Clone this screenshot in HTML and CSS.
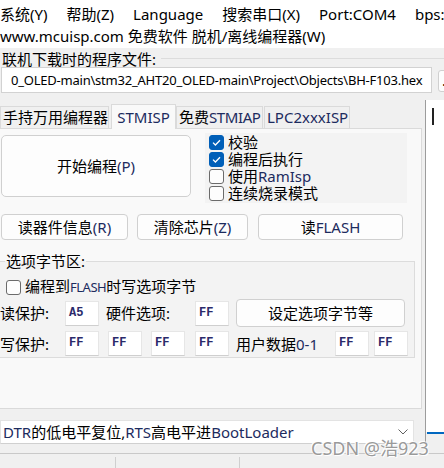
FILE: index.html
```html
<!DOCTYPE html>
<html>
<head>
<meta charset="utf-8">
<title>mcuisp</title>
<link rel="stylesheet" href="styles.css">
</head>
<body>
<div class="app">
  <div class="menubar">
    <span>系统(Y)</span><span>帮助(Z)</span><span>Language</span><span>搜索串口(X)</span><span>Port:COM4</span><span>bps:115200</span>
  </div>
  <div class="siteline">www.mcuisp.com 免费软件 脱机/离线编程器(W)</div>
  <div class="filegroup">
    <div class="fg-head"><span class="fg-label">联机下载时的程序文件:</span><span class="fg-line"></span></div>
    <div class="fg-row">
      <div class="path">0_OLED-main\stm32_AHT20_OLED-main\Project\Objects\BH-F103.hex</div>
      <div class="browse">...</div>
    </div>
  </div>
  <div class="workarea">
    <div class="leftcol">
      <div class="tabs">
        <div class="tab t1">手持万用编程器</div>
        <div class="tab t2 active"><span class="en">STMISP</span></div>
        <div class="tab t3">免费<span class="en">STMIAP</span></div>
        <div class="tab t4"><span class="en">LPC2xxxISP</span></div>
      </div>
      <div class="panel">
        <div class="toprow">
          <div class="btn bigbtn">开始编程<span class="en">(P)</span></div>
          <div class="checks">
            <div class="check"><span class="box on"><svg viewBox="0 0 15 15" width="15" height="15"><path d="M4 7.6l2.4 2.4 4.6-4.8" stroke="#fff" stroke-width="1.3" fill="none"/></svg></span><span class="clabel">校验</span></div>
            <div class="check"><span class="box on"><svg viewBox="0 0 15 15" width="15" height="15"><path d="M4 7.6l2.4 2.4 4.6-4.8" stroke="#fff" stroke-width="1.3" fill="none"/></svg></span><span class="clabel">编程后执行</span></div>
            <div class="check"><span class="box"></span><span class="clabel">使用<span class="en">RamIsp</span></span></div>
            <div class="check"><span class="box"></span><span class="clabel">连续烧录模式</span></div>
          </div>
        </div>
        <div class="btnrow">
          <div class="btn b1">读器件信息<span class="en">(R)</span></div>
          <div class="btn b2">清除芯片<span class="en">(Z)</span></div>
          <div class="btn b3">读<span class="en">FLASH</span></div>
        </div>
        <fieldset class="optgroup">
          <legend>选项字节区:</legend>
          <div class="og-check"><span class="box"></span><span class="clabel">编程到<span class="en narrow">FLASH</span>时写选项字节</span></div>
          <div class="og-row r1">
            <span class="olabel">读保护:</span>
            <span class="hex">A5</span>
            <span class="olabel hw">硬件选项:</span>
            <span class="hex">FF</span>
            <div class="btn setbtn">设定选项字节等</div>
          </div>
          <div class="og-row r2">
            <span class="olabel">写保护:</span>
            <span class="hex">FF</span>
            <span class="hex h2">FF</span>
            <span class="hex h3">FF</span>
            <span class="hex h4">FF</span>
            <span class="olabel ud">用户数据<span class="en">0-1</span></span>
            <span class="hex">FF</span>
            <span class="hex h6">FF</span>
          </div>
        </fieldset>
      </div>
      <div class="combo">
        <span class="combo-text"><span class="en">DTR</span>的低电平复位,<span class="en">RTS</span>高电平进<span class="en">BootLoader</span></span>
        <svg class="chev" viewBox="0 0 10 6" width="10" height="6"><path d="M0.5 0.5l4.5 4.5 4.5-4.5" stroke="#606060" stroke-width="1" fill="none"/></svg>
      </div>
    </div>
    <div class="sidecol">
      <div class="log"><span class="caret"></span></div>
      <div class="progress"></div>
    </div>
  </div>
  <div class="statusbar"><span class="sb sb1"></span><span class="sb sb2"></span><span class="sb sb3"></span></div>
  <div class="watermark">CSDN @浩923</div>
</div>
</body>
</html>
```
FILE: styles.css
```css
html, body {
  margin: 0;
  padding: 0;
}
body {
  background: #f0f0f0;
  font-family: "Noto Sans", "Noto Sans CJK SC", sans-serif;
  font-size: 15px;
  color: #000;
}
.app {
  width: 444px;
  height: 468px;
  position: relative;
  overflow: hidden;
}
.menubar {
  height: 28px;
  background: #fff;
  display: flex;
  align-items: center;
  gap: 19px;
  white-space: nowrap;
  line-height: 16px;
}
.siteline {
  height: 20px;
  background: #fff;
  line-height: 16px;
  white-space: nowrap;
}
.filegroup {
  height: 52px;
}
.fg-head {
  display: flex;
  align-items: center;
  height: 15px;
  padding-top: 4px;
  padding-left: 2px;
  line-height: 15px;
  white-space: nowrap;
}
.fg-line {
  flex: 1;
  border-top: 1px solid #dcdcdc;
  margin-left: 5px;
  margin-top: -3px;
}
.fg-row {
  display: flex;
  white-space: nowrap;
}
.path {
  flex: none;
  margin-left: 1px;
  width: 420px;
  height: 24px;
  padding-left: 9px;
  background: #fff;
  border: 1px solid #d2d2d2;
  font-size: 13px;
  letter-spacing: -0.22px;
  line-height: 24px;
  overflow: hidden;
}
.browse {
  flex: none;
  margin-left: 6px;
  margin-top: 3px;
  width: 24px;
  height: 20px;
  border: 1px solid #d0d0d0;
  border-radius: 3px;
  background: #fdfdfd;
  line-height: 18px;
  padding-left: 3px;
}
.workarea {
  display: flex;
  height: 353px;
}
.leftcol {
  width: 422px;
  flex: none;
}
.tabs {
  height: 28px;
  display: flex;
  align-items: flex-end;
  white-space: nowrap;
}
.tab {
  height: 22px;
  box-sizing: border-box;
  border: 1px solid #dadada;
  border-bottom: none;
  background: #f0f0f0;
  line-height: 20px;
  padding: 0 2px;
  text-align: center;
  flex: none;
}
.t1 {
  width: 109px;
}
.t2 {
  margin-left: 2px;
  width: 65px;
}
.t3 {
  width: 87px;
}
.t3 .en {
  letter-spacing: -0.4px;
}
.t4 {
  margin-left: 1px;
  width: 86px;
}
.tab.active {
  height: 25px;
  background: #f9f9f9;
  line-height: 24px;
  position: relative;
  z-index: 1;
  margin-bottom: -1px;
}
.panel {
  height: 281px;
  box-sizing: border-box;
  background: #f9f9f9;
  border: 1px solid #dadada;
  border-left: none;
}
.en {
  color: #1c2b5e;
}
.narrow {
  font-size: 13px;
  letter-spacing: -0.5px;
}
.btn {
  box-sizing: border-box;
  border: 1px solid #d0d0d0;
  border-radius: 4px;
  background: #fdfdfd;
  display: flex;
  align-items: center;
  justify-content: center;
  white-space: nowrap;
  line-height: 16px;
}
.toprow {
  display: flex;
  margin-top: 6px;
}
.bigbtn {
  margin-left: 1px;
  width: 190px;
  height: 62px;
  border-radius: 5px;
}
.checks {
  margin-left: 14px;
  margin-top: -2px;
  width: 202px;
  height: 70px;
  background: #f3f3f3;
  padding-top: 1px;
  box-sizing: border-box;
}
.check {
  display: flex;
  align-items: center;
  height: 17px;
  padding-left: 4px;
}
.box {
  width: 15px;
  height: 15px;
  box-sizing: border-box;
  border: 1px solid #6b6b6b;
  border-radius: 3px;
  background: #fdfdfd;
  flex: none;
  display: block;
}
.box svg {
  display: block;
  margin: -1px;
}
.box.on {
  background: #005fb8;
  border-color: #005fb8;
}
.clabel {
  margin-left: 4px;
  line-height: 17px;
  white-space: nowrap;
}
.btnrow {
  display: flex;
  margin-top: 11px;
  height: 26px;
}
.btnrow .btn {
  height: 26px;
}
.b1 {
  margin-left: 1px;
  width: 127px;
}
.b2 {
  margin-left: 9px;
  width: 111px;
}
.b3 {
  margin-left: 10px;
  width: 145px;
}
.optgroup {
  margin: 13px 0 0 0;
  padding: 0;
  width: 415px;
  box-sizing: border-box;
  border: 1px solid #dcdcdc;
  border-left: none;
  background: #f3f3f3;
  min-inline-size: 0;
}
.optgroup legend {
  padding: 0 1px;
  margin-left: 5px;
  line-height: 16px;
}
.og-check {
  display: flex;
  align-items: center;
  height: 16px;
  margin-top: 10px;
  padding-left: 6px;
}
.og-row {
  display: flex;
  align-items: center;
  white-space: nowrap;
}
.r1 {
  height: 28px;
  margin-top: 4px;
}
.r2 {
  height: 27px;
  margin-top: 3px;
}
.olabel {
  width: 65px;
  flex: none;
  line-height: 16px;
}
.hw {
  margin-left: 7px;
  width: 89px;
}
.ud {
  margin-left: 7px;
  width: 99px;
}
.hex {
  width: 34px;
  height: 25px;
  box-sizing: border-box;
  flex: none;
  background: #fff;
  border: 1px solid #e6e6e6;
  border-bottom-color: #cfcfcf;
  font-family: "Liberation Mono", monospace;
  font-weight: bold;
  font-size: 12px;
  line-height: 23px;
  padding-left: 3px;
  color: #2a2a6a;
}
.h2 {
  margin-left: 9px;
}
.h3 {
  margin-left: 9px;
}
.h4 {
  margin-left: 10px;
}
.h6 {
  margin-left: 5px;
}
.setbtn {
  margin-left: 7px;
  width: 169px;
  height: 28px;
}
.combo {
  margin-top: 11px;
  width: 414px;
  height: 24px;
  box-sizing: border-box;
  background: #fff;
  border: 1px solid #e3e3e3;
  border-bottom-color: #d0d0d0;
  display: flex;
  align-items: center;
  padding-left: 2px;
  white-space: nowrap;
}
.combo-text {
  flex: 1;
  line-height: 16px;
}
.chev {
  margin-right: 5px;
  display: block;
}
.sidecol {
  flex: 1;
  margin-left: 3px;
  border-left: 1px solid #9c9c9c;
}
.log {
  height: 332px;
  background: #fff;
  box-sizing: border-box;
  padding-top: 8px;
  padding-left: 6px;
}
.caret {
  display: block;
  width: 2px;
  height: 17px;
  background: #222;
}
.progress {
  height: 2px;
  margin-left: 1px;
  background: #0067c0;
}
.statusbar {
  height: 14px;
  border-top: 1px solid #c9c9c9;
  display: flex;
}
.sb {
  display: block;
  margin-top: 3px;
  border-right: 1px solid #cfcfcf;
}
.sb1 {
  width: 115px;
}
.sb2 {
  width: 123px;
}
.sb3 {
  border-right: none;
}
.watermark {
  position: absolute;
  left: 311px;
  top: 438px;
  font-size: 18px;
  line-height: 20px;
  color: #9a9a9a;
  white-space: nowrap;
  text-shadow: 0 0 1px #fff, 0 0 2px #fff, 1px 1px 0 #fff, -1px -1px 0 #fff;
}
```
